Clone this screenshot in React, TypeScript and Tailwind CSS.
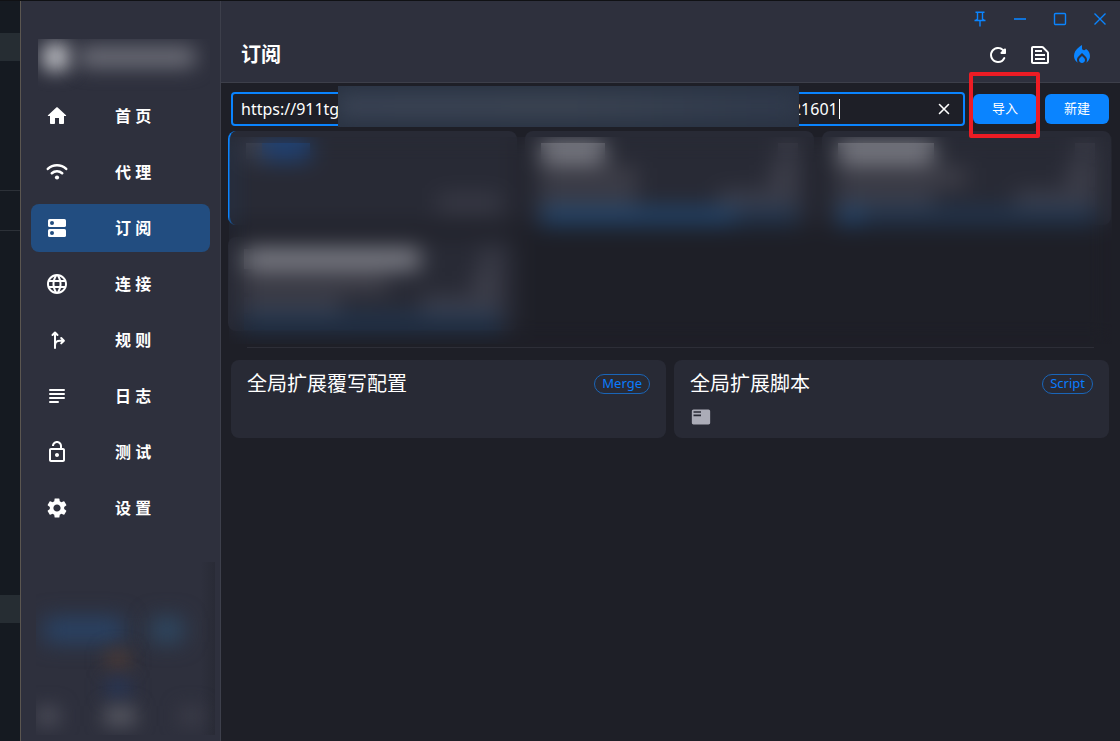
import React, { useState } from "react";
import type { ReactNode } from "react";
import {
  MdFeaturedPlayList,
  MdLanguage,
  MdLocalFireDepartment,
  MdOutlineLockOpen,
  MdOutlineTextSnippet,
  MdSettings,
} from "react-icons/md";

function Svg({ children }: { children: ReactNode }) {
  return (
    <svg viewBox="0 0 24 24" className="size-6" fill="none" aria-hidden="true">
      {children}
    </svg>
  );
}

const HomeIcon = () => (
  <Svg>
    <path
      fill="currentColor"
      d="M10 19v-5h4v5c0 .55.45 1 1 1h3c.55 0 1-.45 1-1v-7h1.7c.46 0 .68-.57.33-.87L12.67 3.6c-.38-.34-.96-.34-1.34 0l-8.36 7.53c-.34.3-.13.87.33.87H5v7c0 .55.45 1 1 1h3c.55 0 1-.45 1-1z"
    />
  </Svg>
);

const WifiIcon = () => (
  <Svg>
    <path
      stroke="currentColor"
      strokeWidth="2.6"
      strokeLinecap="round"
      d="M2.8 8.9a13.6 13.6 0 0 1 18.4 0M6.8 13.2a8 8 0 0 1 10.4 0"
    />
    <circle cx="12" cy="17.5" r="2.1" fill="currentColor" />
  </Svg>
);

const DnsIcon = () => (
  <Svg>
    <rect x="3" y="3" width="18" height="8" rx="1.600" fill="currentColor" />
    <rect x="3" y="13" width="18" height="8" rx="1.600" fill="currentColor" />
    <circle cx="7" cy="7" r="2" fill="#224d80" />
    <circle cx="7" cy="17" r="2" fill="#224d80" />
  </Svg>
);

const ForkIcon = () => (
  <Svg>
    <path
      stroke="currentColor"
      strokeWidth="2"
      strokeLinecap="round"
      strokeLinejoin="round"
      d="M10 20V5M7.5 7 10 4.5 12.5 7M10 17.5c0-3.3 2-4.8 5-4.8h3M16.2 10l2.7 2.7-2.7 2.7"
    />
  </Svg>
);

const SubjectIcon = () => (
  <Svg>
    <path
      stroke="currentColor"
      strokeWidth="2"
      strokeLinecap="round"
      d="M5 6h14M5 10h14M5 14h14M5 18h8"
    />
  </Svg>
);

const navItems = [
  { label: "首 页", icon: <HomeIcon /> },
  { label: "代 理", icon: <WifiIcon /> },
  { label: "订 阅", icon: <DnsIcon />, active: true },
  { label: "连 接", icon: <MdLanguage className="size-6" /> },
  { label: "规 则", icon: <ForkIcon /> },
  { label: "日 志", icon: <SubjectIcon /> },
  { label: "测 试", icon: <MdOutlineLockOpen className="size-6" /> },
  { label: "设 置", icon: <MdSettings className="size-6" /> },
];

function DesktopEdge() {
  return (
    <div className="flex w-5 shrink-0 flex-col bg-[#151a21]">
      <div className="h-8" />
      <div className="h-7 bg-[#262d33]" />
      <div className="h-[129px]" />
      <div className="h-[41px] border-y border-[#2c3138]" />
      <div className="grow" />
      <div className="h-7 bg-[#262d33]" />
      <div className="h-[118px]" />
    </div>
  );
}

function BrandBlock() {
  return (
    <div className="ml-[7px] flex h-[59px] items-start overflow-hidden">
      <div className="mt-1 ml-1 size-7 shrink-0 rounded-lg bg-[#b4b5bb] blur-[9px]" />
      <div className="mt-2 ml-2 h-5 w-[118px] rounded-lg bg-[#70717b] blur-[10px]" />
    </div>
  );
}

function TrafficBlock() {
  return (
    <div className="-mr-[5px] ml-[5px] flex h-[173px] flex-col overflow-hidden bg-linear-to-r from-transparent from-92% to-[#292b36]">
      <div className="mt-14 flex justify-between pr-8 pl-2">
        <div className="h-6 w-20 bg-[#294468] blur-[11px]" />
        <div className="h-6 w-8 bg-[#2e4a66] blur-[11px]" />
      </div>
      <div className="mt-2 ml-[70px] h-5 w-6 bg-[#493a37] blur-[9px]" />
      <div className="mt-2 ml-[70px] h-5 w-6 bg-[#293655] blur-[9px]" />
      <div className="mt-2 flex justify-between pr-3">
        <div className="h-5 w-6 bg-[#484955] blur-[9px]" />
        <div className="h-5 w-8 bg-[#54555f] blur-[9px]" />
        <div className="h-5 w-6 bg-[#3a3b47] blur-[9px]" />
      </div>
    </div>
  );
}

function Sidebar() {
  return (
    <aside className="flex w-[201px] shrink-0 flex-col border-x border-l-[#5b5650] border-r-[#3d3f4b] bg-[#2e303d] px-[10px] pt-[38px] pb-[6px]">
      <BrandBlock />
      <nav className="-mt-[6px] flex flex-col gap-2">
        {navItems.map((item) => (
          <a
            key={item.label}
            href="#"
            aria-current={item.active ? "page" : undefined}
            className={`flex h-12 items-center rounded-lg pl-[14px] text-base font-bold text-white ${
              item.active ? "bg-[#224d80]" : ""
            }`}
          >
            {item.icon}
            <span className="ml-[46px]">{item.label}</span>
          </a>
        ))}
      </nav>
      <div className="grow" />
      <TrafficBlock />
    </aside>
  );
}

function Header() {
  return (
    <header className="border-b border-[#3d3f4a] bg-[#2e303d] pb-[9px]">
      <div className="flex h-9 items-center justify-end gap-5 pr-[10px] text-[#0a84ff]">
        <button aria-label="置顶" className="flex size-5 items-center justify-center">
          <svg viewBox="0 0 20 20" className="size-5" fill="none" stroke="currentColor" strokeWidth="1.4" aria-hidden="true">
            <path d="M5.5 3.2h9M7.5 3.2v7L5.200 11.500M12.500 3.2v7l2.300 1.300M4.500 11.500h11M10 11.500v6" />
          </svg>
        </button>
        <button aria-label="最小化" className="flex size-5 items-center justify-center">
          <svg viewBox="0 0 20 20" className="size-5" stroke="currentColor" strokeWidth="1.6" aria-hidden="true">
            <path d="M4 10h12" />
          </svg>
        </button>
        <button aria-label="最大化" className="flex size-5 items-center justify-center">
          <svg viewBox="0 0 20 20" className="size-5" fill="none" stroke="currentColor" strokeWidth="1.4" aria-hidden="true">
            <rect x="4.5" y="4.5" width="11" height="11" rx="1" />
          </svg>
        </button>
        <button aria-label="关闭" className="flex size-5 items-center justify-center">
          <svg viewBox="0 0 20 20" className="size-5" stroke="currentColor" strokeWidth="1.4" aria-hidden="true">
            <path d="m4.500 4.500 11 11M15.500 4.500l-11 11" />
          </svg>
        </button>
      </div>
      <div className="flex h-9 items-center justify-between pr-[26px] pl-5">
        <h1 className="text-xl font-bold text-white">订阅</h1>
        <div className="flex gap-[18px] text-white">
          <button aria-label="更新所有订阅" className="flex size-6 items-center justify-center">
            <Svg>
              <path
                fill="currentColor"
                d="M17.650 6.350A7.958 7.958 0 0 0 11.180 4.040c-3.670.37-6.690 3.350-7.100 7.020C3.520 15.910 7.270 20 12 20a7.980 7.980 0 0 0 7.210-4.560c.32-.67-.16-1.440-.9-1.440-.37 0-.72.2-.88.53a5.994 5.994 0 0 1-6.800 3.310c-2.220-.49-4.010-2.300-4.480-4.520A6.002 6.002 0 0 1 12 6c1.660 0 3.140.69 4.220 1.780l-1.510 1.510c-.63.63-.19 1.710.7 1.710H19c.55 0 1-.45 1-1V6.410c0-.89-1.080-1.340-1.710-.71l-.64.65z"
              />
            </Svg>
          </button>
          <button aria-label="查看运行时订阅" className="flex size-6 items-center justify-center">
            <MdOutlineTextSnippet className="size-6" />
          </button>
          <button aria-label="重新激活订阅" className="flex size-6 items-center justify-center text-[#0a84ff]">
            <MdLocalFireDepartment className="size-6" />
          </button>
        </div>
      </div>
    </header>
  );
}

function ImportBar() {
  const [url, setUrl] = useState(
    "https://911tg.000000000000000000000000000000000000000000000000021601"
  );
  return (
    <div className="flex items-center gap-2 pr-[11px] pl-[10px]">
      <div className="relative flex h-[34px] min-w-0 grow items-center rounded border-2 border-[#0a84ff] pr-[10px] pl-2">
        <input
          aria-label="订阅文件链接"
          value={url}
          onChange={(e) => setUrl(e.target.value)}
          className="min-w-0 grow bg-transparent text-base text-white outline-none"
        />
        <div className="absolute -top-2 -bottom-[3px] left-[105px] w-[461px] overflow-hidden bg-[#2a3343]">
          <div className="mt-2 h-6 w-full bg-linear-to-r from-[#3a4354] via-[#3c4553] to-[#303a4c] blur-[10px]" />
        </div>
        <div className="absolute top-[5px] left-[606px] h-5 w-px bg-white" />
        <button aria-label="清除" className="flex size-[18px] items-center justify-center text-white">
          <svg viewBox="0 0 18 18" className="size-[18px]" stroke="currentColor" strokeWidth="1.6" strokeLinecap="round" aria-hidden="true">
            <path d="m4.500 4.500 9 9M13.500 4.500l-9 9" />
          </svg>
        </button>
      </div>
      <div className="relative z-20">
        <button className="h-[30px] w-16 rounded-md bg-[#0a84ff] text-[13px] text-white">导入</button>
        <div className="pointer-events-none absolute -top-[22px] -right-[3px] -bottom-[14px] -left-1 rounded-xs border-4 border-[#ed1c24]" />
      </div>
      <button className="h-[30px] w-16 rounded-md bg-[#0a84ff] text-[13px] text-white">新建</button>
    </div>
  );
}

type Profile = { title: string; sub: string; used: string; selected?: boolean };

const profiles: Profile[] = [
  { title: "w-12", sub: "w-0", used: "w-0", selected: true },
  { title: "w-16", sub: "w-24", used: "w-3/4" },
  { title: "w-24", sub: "w-32", used: "w-6" },
  { title: "w-44", sub: "w-36", used: "w-0" },
];

function ProfileCard({ title, sub, used, selected }: Profile) {
  return (
    <div
      className={`flex h-[94px] flex-col rounded-lg bg-[#282a35] px-4 pt-3 ${
        selected ? "border-l-2 border-[#0a84ff]" : ""
      }`}
    >
      {selected ? (
        <>
          <div className="flex">
            <div className="h-4 w-4 bg-[#484a55]" />
            <div className="h-4 w-12 bg-[#1f4985]" />
          </div>
          <div className="mt-9 h-4 w-16 self-end bg-[#3b3c48]" />
        </>
      ) : (
        <>
          <div className="flex justify-between">
            <div className={`h-5 bg-[#85868e] ${title}`} />
            <div className="h-5 w-5 bg-[#3d3e4a]" />
          </div>
          <div className="mt-1 flex justify-between">
            <div className={`h-5 bg-[#3f3f49] ${sub}`} />
            <div className="h-5 w-7 bg-[#40414d]" />
          </div>
          <div className="mt-1 flex justify-between">
            <div className="h-4 w-24 bg-[#3c3f4c]" />
            <div className="h-4 w-20 bg-[#3e404d]" />
          </div>
          <div className="mt-px h-4 shrink-0 bg-[#203550]">
            <div className={`h-4 bg-[#204670] ${used}`} />
          </div>
        </>
      )}
    </div>
  );
}

function Profiles() {
  return (
    <section className="relative mt-[5px] h-[213px] pr-[9px] pl-[7px]">
      <div className="grid grid-cols-3 gap-x-2 gap-y-3">
        {profiles.map((p) => (
          <ProfileCard key={p.title} {...p} />
        ))}
      </div>
      <div className="absolute top-[6px] right-2 bottom-0 left-2 backdrop-blur-[11px]" />
    </section>
  );
}

function ConfigCard({ title, tag, children }: { title: string; tag: string; children?: ReactNode }) {
  return (
    <article className="h-[78px] rounded-lg bg-[#282a35] px-4 pt-[9px]">
      <div className="flex h-[30px] items-center justify-between">
        <h2 className="text-xl text-white">{title}</h2>
        <span className="flex h-5 items-center rounded-full border border-[#1a65b8] px-[7px] text-[13px] text-[#0a7cff]">
          {tag}
        </span>
      </div>
      {children}
    </article>
  );
}

export default function App() {
  return (
    <div className="flex min-h-screen border-t border-[#101114] bg-[#1e1f27] font-['Noto_Sans','Noto_Sans_CJK_SC',sans-serif]">
      <DesktopEdge />
      <Sidebar />
      <main className="min-w-0 grow">
        <Header />
        <div className="pt-[9px]">
          <ImportBar />
          <Profiles />
          <hr className="mx-[26px] mt-[3px] border-[#2d2e37]" />
          <section className="mt-3 grid grid-cols-2 gap-2 pr-[11px] pl-[10px]">
            <ConfigCard title="全局扩展覆写配置" tag="Merge" />
            <ConfigCard title="全局扩展脚本" tag="Script">
              <button aria-label="脚本控制台" className="mt-2 ml-px flex text-[#abacb7]">
                <MdFeaturedPlayList className="size-5" />
              </button>
            </ConfigCard>
          </section>
        </div>
      </main>
    </div>
  );
}
